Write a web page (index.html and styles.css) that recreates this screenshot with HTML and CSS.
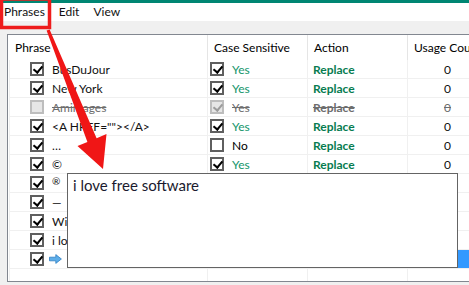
FILE: index.html
```html
<!DOCTYPE html>
<html lang="en">
<head>
    <meta charset="UTF-8">
    <meta name="viewport" content="width=device-width, initial-scale=1.0">
    <title>Phrases</title>
    <link rel="stylesheet" href="styles.css">
</head>
<body>
    <div class="accent-bar"></div>
    <div class="menu-bar">
        <span class="menu-item">Phrases</span>
        <span class="menu-item">Edit</span>
        <span class="menu-item">View</span>
    </div>

    <div class="phrase-list">
        <div class="list-header">
            <div class="col col-phrase">Phrase</div>
            <div class="col col-case">Case Sensitive</div>
            <div class="col col-action">Action</div>
            <div class="col col-usage">Usage Count</div>
        </div>

        <div class="list-row">
            <div class="cell cell-phrase"><span class="check checked"></span>BusDuJour</div>
            <div class="cell cell-case"><span class="check checked"></span>Yes</div>
            <div class="cell cell-action">Replace</div>
            <div class="cell cell-usage">0</div>
        </div>
        <div class="list-row">
            <div class="cell cell-phrase"><span class="check checked"></span>New York</div>
            <div class="cell cell-case"><span class="check checked"></span>Yes</div>
            <div class="cell cell-action">Replace</div>
            <div class="cell cell-usage">0</div>
        </div>
        <div class="list-row disabled">
            <div class="cell cell-phrase"><span class="check"></span>Amimages</div>
            <div class="cell cell-case"><span class="check checked"></span>Yes</div>
            <div class="cell cell-action">Replace</div>
            <div class="cell cell-usage">0</div>
        </div>
        <div class="list-row">
            <div class="cell cell-phrase"><span class="check checked"></span>&lt;A HREF=""&gt;&lt;/A&gt;</div>
            <div class="cell cell-case"><span class="check checked"></span>Yes</div>
            <div class="cell cell-action">Replace</div>
            <div class="cell cell-usage">0</div>
        </div>
        <div class="list-row">
            <div class="cell cell-phrase"><span class="check checked"></span>…</div>
            <div class="cell cell-case off"><span class="check"></span>No</div>
            <div class="cell cell-action">Replace</div>
            <div class="cell cell-usage">0</div>
        </div>
        <div class="list-row">
            <div class="cell cell-phrase"><span class="check checked"></span>©</div>
            <div class="cell cell-case"><span class="check checked"></span>Yes</div>
            <div class="cell cell-action">Replace</div>
            <div class="cell cell-usage">0</div>
        </div>
        <div class="list-row">
            <div class="cell cell-phrase"><span class="check checked"></span><span class="small-glyph">®</span></div>
            <div class="cell cell-case"><span class="check checked"></span>Yes</div>
            <div class="cell cell-action">Replace</div>
            <div class="cell cell-usage">0</div>
        </div>
        <div class="list-row">
            <div class="cell cell-phrase"><span class="check checked"></span>—</div>
            <div class="cell cell-case"><span class="check checked"></span>Yes</div>
            <div class="cell cell-action">Replace</div>
            <div class="cell cell-usage">0</div>
        </div>
        <div class="list-row">
            <div class="cell cell-phrase"><span class="check checked"></span>Wilkommen</div>
            <div class="cell cell-case"><span class="check checked"></span>Yes</div>
            <div class="cell cell-action">Replace</div>
            <div class="cell cell-usage">0</div>
        </div>
        <div class="list-row">
            <div class="cell cell-phrase"><span class="check checked"></span>i love free software</div>
            <div class="cell cell-case"><span class="check checked"></span>Yes</div>
            <div class="cell cell-action">Replace</div>
            <div class="cell cell-usage">0</div>
        </div>
        <div class="list-row">
            <div class="cell cell-phrase"><span class="check checked"></span><svg class="arrow-icon" width="13" height="10" viewBox="0 0 13 10"><path d="M0.5 3.2 H6.8 V0.6 L12.4 5 L6.8 9.4 V6.8 H0.5 Z" fill="#5eaee9" stroke="#2f7fc4" stroke-width="0.8"/></svg></div>
            <div class="cell cell-case"><span class="check checked"></span>Yes</div>
            <div class="cell cell-action">Replace</div>
            <div class="cell cell-usage selected">0</div>
        </div>

        <div class="list-filler">
            <div class="cell cell-phrase"></div>
            <div class="cell cell-case"></div>
            <div class="cell cell-action"></div>
            <div class="cell cell-usage"></div>
        </div>
    </div>

    <div class="phrase-tooltip">i love free software</div>

    <svg class="annotation" width="469" height="285" viewBox="0 0 469 285">
        <rect x="1.5" y="-1" width="48" height="28.5" fill="none" stroke="#ee1c1c" stroke-width="3.5"/>
        <polygon points="46.6,30.6 49.6,29.4 96.6,138.2 106.5,134 103,169 77.5,146 87.4,141.9" fill="#f01616"/>
    </svg>
</body>
</html>
```

FILE: styles.css
```css
:root {
    --accent-color: #008673;
    --border-color: #828790;
    --grid-color: #f0f0f0;
    --divider-color: #e5e5e5;
    --window-color: #f0f0f0;
    --yes-color: #13966a;
    --action-color: #077c50;
    --select-color: #3399ff;
    --font-family: 'Lato', 'Noto Sans', sans-serif;
}

* {
    margin: 0;
    padding: 0;
    box-sizing: border-box;
}

body {
    font-family: var(--font-family);
    font-size: 12px;
    color: #111;
    background: var(--window-color);
    height: 100vh;
    overflow: hidden;
    position: relative;
}

.accent-bar {
    height: 3px;
    background: var(--accent-color);
}

.menu-bar {
    height: 18px;
    background: #fff;
    display: flex;
    align-items: center;
    gap: 14px;
    padding-left: 4px;
}

.menu-item {
    line-height: 18px;
}

.phrase-list {
    margin: 13px 0 0 7px;
    width: 520px;
    height: 248px;
    border: 1px solid var(--border-color);
    background: #fff;
    overflow: hidden;
}

.list-header {
    display: flex;
    height: 25px;
    color: #000;
}

.list-header .col {
    display: flex;
    align-items: center;
    padding-left: 6px;
    border-right: 1px solid var(--divider-color);
    white-space: nowrap;
    overflow: hidden;
}

.col-phrase {
    width: 200px;
}

.list-header .col-phrase {
    padding-left: 7px;
}

.col-case, .col-action {
    width: 100px;
}

.col-usage {
    width: 80px;
}

.list-row, .list-filler {
    display: flex;
    height: 19px;
    margin-left: 1px;
    border-left: 1px solid var(--grid-color);
    border-bottom: 1px solid var(--grid-color);
}

.list-filler {
    height: 12px;
    border-bottom: none;
}

.cell {
    display: flex;
    align-items: center;
    border-right: 1px solid var(--grid-color);
    white-space: nowrap;
    overflow: hidden;
}

.cell-phrase {
    width: 198px;
    padding-left: 20px;
    gap: 8px;
}

.cell-case {
    width: 100px;
    padding-left: 2px;
    gap: 8px;
    color: var(--yes-color);
}

.cell-case.off {
    color: #000;
}

.cell-action {
    width: 100px;
    padding-left: 5px;
    font-weight: bold;
    color: var(--action-color);
}

.cell-usage {
    width: 80px;
    justify-content: center;
}

.cell-usage.selected {
    background: var(--select-color);
    color: #fff;
}

.check {
    position: relative;
    flex-shrink: 0;
    width: 14px;
    height: 14px;
    border: 2px solid #5f5f5f;
    background: #fff;
}

.check.checked::after {
    content: "";
    position: absolute;
    left: 3px;
    top: 0;
    width: 4px;
    height: 7px;
    border: solid #000;
    border-width: 0 2px 2px 0;
    transform: rotate(40deg);
}

.list-row.disabled .cell {
    color: #6d6d6d;
    text-decoration: line-through;
}

.list-row.disabled .check {
    border-color: #bdbdbd;
    background: #e6e6e6;
}

.list-row.disabled .check.checked::after {
    border-color: #9c9c9c;
}

.small-glyph {
    font-size: 10px;
    align-self: flex-start;
    margin-top: 1px;
}

.arrow-icon {
    margin-left: -3px;
}

.phrase-tooltip {
    position: absolute;
    left: 67px;
    top: 173px;
    width: 391px;
    height: 95px;
    padding: 2px 5px;
    border: 1px solid #646464;
    background: #fff;
    font-size: 15px;
    color: #1a1a2e;
}

.annotation {
    position: absolute;
    top: 0;
    left: 0;
    pointer-events: none;
}
```
